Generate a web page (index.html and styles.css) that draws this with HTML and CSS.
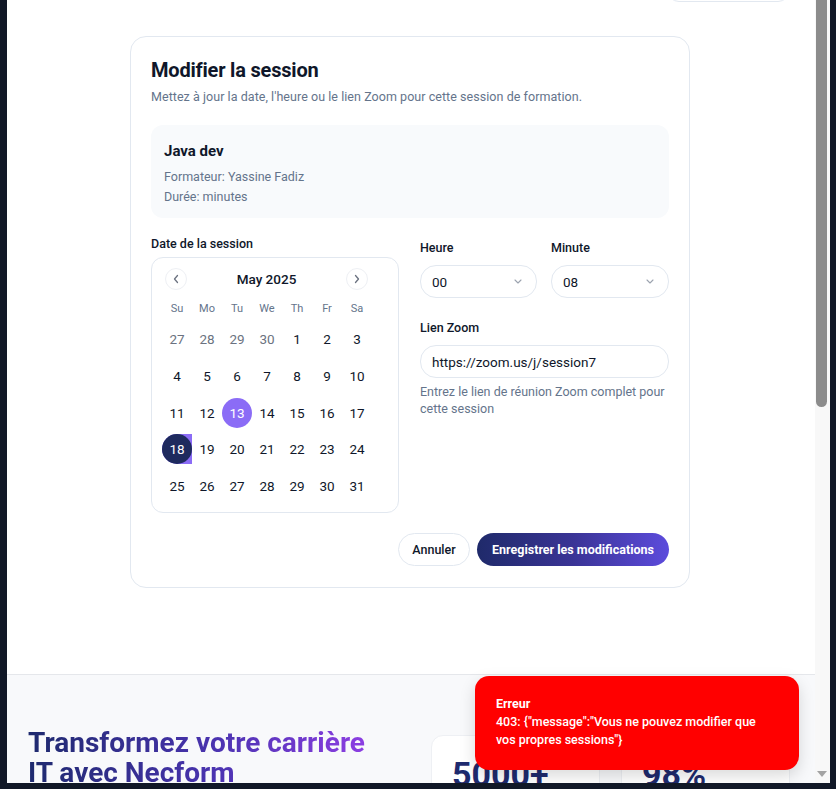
FILE: index.html
```html
<!DOCTYPE html>
<html lang="fr">
<head>
<meta charset="utf-8">
<title>Modifier la session</title>
<link rel="stylesheet" href="styles.css">
</head>
<body>
<div class="viewport">
  <div class="page">
    <div class="topbar"><button class="top-btn" type="button"></button></div>

    <div class="modal">
      <h2 class="modal-title">Modifier la session</h2>
      <p class="modal-sub">Mettez à jour la date, l'heure ou le lien Zoom pour cette session de formation.</p>

      <div class="info">
        <div class="info-title">Java dev</div>
        <div class="info-line">Formateur: Yassine Fadiz</div>
        <div class="info-line">Durée: minutes</div>
      </div>

      <div class="form-grid">
        <div class="col-left">
          <div class="label">Date de la session</div>
          <div class="calendar">
            <div class="cal-head">
              <span class="nav-btn"><svg width="8" height="10" viewBox="0 0 8 10"><path d="M5.5 1.5 L2.5 5 L5.5 8.5" fill="none" stroke="#6b7280" stroke-width="1.3" stroke-linecap="round" stroke-linejoin="round"/></svg></span>
              <span class="cal-month">May 2025</span>
              <span class="nav-btn"><svg width="8" height="10" viewBox="0 0 8 10"><path d="M2.5 1.5 L5.5 5 L2.5 8.5" fill="none" stroke="#6b7280" stroke-width="1.3" stroke-linecap="round" stroke-linejoin="round"/></svg></span>
            </div>
            <div class="cal-grid">
              <span class="wd">Su</span><span class="wd">Mo</span><span class="wd">Tu</span><span class="wd">We</span><span class="wd">Th</span><span class="wd">Fr</span><span class="wd">Sa</span>
            </div>
            <div class="cal-days">
              <span class="day out">27</span><span class="day out">28</span><span class="day out">29</span><span class="day out">30</span><span class="day">1</span><span class="day">2</span><span class="day">3</span>
              <span class="day">4</span><span class="day">5</span><span class="day">6</span><span class="day">7</span><span class="day">8</span><span class="day">9</span><span class="day">10</span>
              <span class="day">11</span><span class="day">12</span><span class="day today">13</span><span class="day">14</span><span class="day">15</span><span class="day">16</span><span class="day">17</span>
              <span class="day sel-cell"><span class="sel">18</span></span><span class="day">19</span><span class="day">20</span><span class="day">21</span><span class="day">22</span><span class="day">23</span><span class="day">24</span>
              <span class="day">25</span><span class="day">26</span><span class="day">27</span><span class="day">28</span><span class="day">29</span><span class="day">30</span><span class="day">31</span>
            </div>
          </div>
        </div>

        <div class="col-right">
          <div class="time-row">
            <div>
              <div class="label">Heure</div>
              <div class="select"><span>00</span><svg width="8" height="5" viewBox="0 0 8 5"><path d="M1 1 L4 4 L7 1" fill="none" stroke="#9ca3af" stroke-width="1.1" stroke-linecap="round" stroke-linejoin="round"/></svg></div>
            </div>
            <div>
              <div class="label">Minute</div>
              <div class="select"><span>08</span><svg width="8" height="5" viewBox="0 0 8 5"><path d="M1 1 L4 4 L7 1" fill="none" stroke="#9ca3af" stroke-width="1.1" stroke-linecap="round" stroke-linejoin="round"/></svg></div>
            </div>
          </div>
          <div class="label label-zoom">Lien Zoom</div>
          <div class="input">https://zoom.us/j/session7</div>
          <p class="help">Entrez le lien de réunion Zoom complet pour cette session</p>
        </div>
      </div>

      <div class="actions">
        <button class="btn-cancel" type="button">Annuler</button>
        <button class="btn-save" type="button">Enregistrer les modifications</button>
      </div>
    </div>

    <section class="cta">
      <h1 class="cta-title">Transformez votre carrière<br>IT avec Necform</h1>
      <div class="stats">
        <div class="stat"><span class="stat-num">5000+</span></div>
        <div class="stat"><span class="stat-num">98%</span></div>
      </div>
    </section>

    <div class="toast">
      <div class="toast-title">Erreur</div>
      <div class="toast-msg">403: {"message":"Vous ne pouvez modifier que vos propres sessions"}</div>
    </div>
  </div>
  <div class="scrollbar">
    <div class="thumb"></div>
    <div class="arrow-down"></div>
  </div>
</div>
</body>
</html>
```

FILE: styles.css
```css
* { box-sizing: border-box; }
html, body { margin: 0; padding: 0; }
body {
  background: #111827;
  width: 836px;
  height: 789px;
  overflow: hidden;
  font-family: Roboto, "Noto Sans", sans-serif;
  color: #0f172a;
}
.viewport {
  margin-left: 7px;
  width: 823px;
  height: 783px;
  display: flex;
  overflow: hidden;
}
.page {
  width: 808px;
  height: 783px;
  background: #ffffff;
  position: relative;
  overflow: hidden;
}
.scrollbar {
  width: 15px;
  height: 783px;
  background: #f8f8f8;
  position: relative;
}
.thumb {
  margin-left: 1px;
  width: 11px;
  height: 407px;
  background: #8c8c8c;
  border-radius: 0 0 6px 6px;
}
.arrow-down {
  position: absolute;
  left: 2px;
  bottom: 6px;
  width: 0;
  height: 0;
  border-left: 5px solid transparent;
  border-right: 5px solid transparent;
  border-top: 6px solid #a3a3a3;
}

.topbar {
  height: 36px;
  display: flex;
  justify-content: flex-end;
  padding-right: 25px;
}
.top-btn {
  margin-top: -32px;
  width: 123px;
  height: 34px;
  border: 1px solid #e2e8f0;
  border-radius: 12px;
  background: #fff;
}

.modal {
  margin-left: 123px;
  width: 560px;
  border: 1px solid #e2e8f0;
  border-radius: 16px;
  padding: 20px 20px 21px;
  background: #fff;
}
.modal-title {
  margin: 0;
  padding-top: 1px;
  font-size: 20px;
  line-height: 24px;
  font-weight: 700;
  color: #0f172a;
  letter-spacing: -0.2px;
}
.modal-sub {
  margin: 6px 0 0;
  font-size: 12.5px;
  line-height: 18px;
  color: #64748b;
  letter-spacing: 0.05px;
}
.info {
  margin-top: 19px;
  background: #f8fafc;
  border-radius: 12px;
  padding: 16px 13px 11px;
}
.info-title {
  font-size: 15px;
  line-height: 20px;
  font-weight: 700;
  color: #0f172a;
}
.info-line {
  font-size: 12.5px;
  line-height: 20px;
  color: #64748b;
}
.info-title + .info-line { margin-top: 6px; }

.form-grid {
  margin-top: 17px;
  display: grid;
  grid-template-columns: 249px 249px;
  column-gap: 20px;
}
.label {
  font-size: 12.5px;
  line-height: 18px;
  font-weight: 500;
  color: #0f172a;
}
.calendar {
  margin-top: 4px;
  width: 248px;
  border: 1px solid #e2e8f0;
  border-radius: 12px;
  padding: 10px 10px 11px;
}
.cal-head {
  width: 210px;
  height: 22px;
  display: flex;
  align-items: center;
  justify-content: space-between;
  padding: 0 4px 0 3px;
}
.nav-btn {
  width: 22px;
  height: 22px;
  border: 1px solid #eef0f4;
  border-radius: 50%;
  display: flex;
  align-items: center;
  justify-content: center;
}
.cal-month {
  font-size: 13.5px;
  font-weight: 500;
  color: #0f172a;
}
.cal-grid, .cal-days {
  width: 210px;
  display: grid;
  grid-template-columns: repeat(7, 30px);
}
.cal-grid { margin-top: 9px; }
.wd {
  height: 20px;
  line-height: 20px;
  text-align: center;
  font-size: 11px;
  color: #64748b;
}
.cal-days {
  margin-top: 5px;
  grid-auto-rows: 30px;
  row-gap: 6.75px;
}
.day {
  display: flex;
  align-items: center;
  justify-content: center;
  font-size: 13.5px;
  color: #0f172a;
  border-radius: 50%;
}
.day.out { color: #6b7280; }
.day.today { background: #8b6cf6; color: #fff; }
.sel-cell {
  background: #8b6cf6;
  border-radius: 50% 0 0 50%;
  position: relative;
}
.sel {
  width: 30px;
  height: 30px;
  border-radius: 50%;
  background: #1e2a5e;
  color: #fff;
  display: flex;
  align-items: center;
  justify-content: center;
}

.col-right { padding-top: 4px; }
.time-row {
  display: grid;
  grid-template-columns: 117px 118px;
  column-gap: 14px;
}
.select {
  margin-top: 8px;
  height: 33px;
  border: 1px solid #e2e8f0;
  border-radius: 16px;
  padding: 0 14px 0 11px;
  display: flex;
  align-items: center;
  justify-content: space-between;
  font-size: 13.5px;
  color: #0f172a;
}
.label-zoom { margin-top: 21px; }
.input {
  margin-top: 8px;
  height: 33px;
  border: 1px solid #e2e8f0;
  border-radius: 16px;
  padding: 0 11px;
  display: flex;
  align-items: center;
  font-size: 13.5px;
  color: #0f172a;
}
.help {
  margin: 5px 0 0;
  font-size: 12.5px;
  line-height: 17px;
  color: #64748b;
}

.actions {
  margin-top: 20px;
  display: flex;
  justify-content: flex-end;
  gap: 7px;
}
.btn-cancel, .btn-save {
  height: 33px;
  border-radius: 17px;
  font-family: inherit;
  font-size: 12.5px;
  font-weight: 500;
  padding: 0;
}
.btn-cancel {
  width: 72px;
  background: #fff;
  border: 1px solid #e2e8f0;
  color: #0f172a;
}
.btn-save {
  width: 192px;
  border: none;
  color: #fff;
  font-weight: 700;
  background: linear-gradient(90deg, #1f2a6a 0%, #3a3496 50%, #5c4bdc 100%);
}

.cta {
  margin-top: 86px;
  border-top: 1px solid #e5e7eb;
  background: #f8f9fb;
  height: 200px;
  padding: 53px 0 0 21px;
  display: flex;
  gap: 63px;
}
.cta-title {
  margin: 0;
  width: 340px;
  flex: none;
  font-size: 28px;
  line-height: 30px;
  font-weight: 700;
  letter-spacing: 0;
  background: linear-gradient(90deg, #1e2a6e 0%, #4a33b0 55%, #8d3ee3 100%);
  -webkit-background-clip: text;
  background-clip: text;
  color: transparent;
  white-space: nowrap;
}
.stats {
  margin-top: 7px;
  display: grid;
  grid-template-columns: 169px 169px;
  column-gap: 21px;
}
.stat {
  height: 120px;
  background: #fff;
  border: 1px solid #eef0f4;
  border-radius: 12px;
  padding: 18px 0 0 20px;
}
.stat-num {
  font-size: 34px;
  line-height: 40px;
  font-weight: 700;
  color: #1e2a6e;
}

.toast {
  position: absolute;
  right: 16px;
  bottom: 13px;
  width: 324px;
  background: #ff0000;
  border-radius: 14px;
  padding: 19px 21px 21px;
  color: #fff;
  box-shadow: 0 6px 16px rgba(0,0,0,0.15);
}
.toast-title {
  font-size: 12.5px;
  line-height: 18px;
  font-weight: 700;
}
.toast-msg {
  font-size: 12.5px;
  line-height: 18px;
  font-weight: 500;
}
```
